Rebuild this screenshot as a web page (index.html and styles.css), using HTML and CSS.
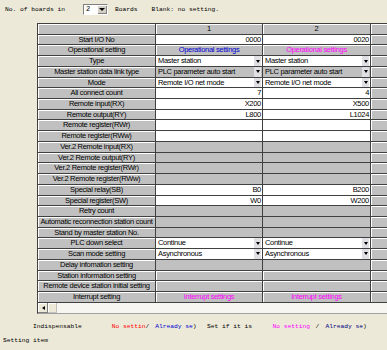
FILE: index.html
```html
<!DOCTYPE html>
<html lang="en">
<head>
    <meta charset="UTF-8">
    <meta name="viewport" content="width=device-width, initial-scale=1.0">
    <title>Network Parameter Setting</title>
    <link rel="stylesheet" href="styles.css">
</head>
<body>
    <div class="topbar">
        <span>No. of boards in</span>
        <div class="boards-select">
            <span class="boards-value">2</span>
            <span class="boards-arrow"></span>
        </div>
        <span class="boards-label">Boards</span>
        <span class="blank-note">Blank: no setting.</span>
    </div>

    <div class="table-wrap">
        <div class="grid">
            <div class="lbl"></div><div class="lbl">1</div><div class="lbl">2</div><div class="lbl"></div>

            <div class="lbl">Start I/O No</div>
            <div class="num">0000</div><div class="num">0020</div><div class="lbl"></div>

            <div class="lbl">Operational setting</div>
            <div class="btn blue">Operational settings</div><div class="btn pink">Operational settings</div><div class="lbl"></div>

            <div class="lbl">Type</div>
            <div class="sel"><span>Master station</span><span class="arrow"></span></div>
            <div class="sel"><span>Master station</span><span class="arrow"></span></div>
            <div class="lbl"></div>

            <div class="lbl">Master station data link type</div>
            <div class="sel off"><span>PLC parameter auto start</span><span class="arrow"></span></div>
            <div class="sel off"><span>PLC parameter auto start</span><span class="arrow"></span></div>
            <div class="lbl"></div>

            <div class="lbl">Mode</div>
            <div class="sel"><span>Remote I/O net mode</span><span class="arrow"></span></div>
            <div class="sel"><span>Remote I/O net mode</span><span class="arrow"></span></div>
            <div class="lbl"></div>

            <div class="lbl">All connect count</div>
            <div class="num">7</div><div class="num">4</div><div class="lbl"></div>

            <div class="lbl">Remote input(RX)</div>
            <div class="num">X200</div><div class="num">X500</div><div class="lbl"></div>

            <div class="lbl">Remote output(RY)</div>
            <div class="num">L800</div><div class="num">L1024</div><div class="lbl"></div>

            <div class="lbl">Remote register(RWr)</div>
            <div class="val"></div><div class="val"></div><div class="lbl"></div>

            <div class="lbl">Remote register(RWw)</div>
            <div class="val"></div><div class="val"></div><div class="lbl"></div>

            <div class="lbl">Ver.2 Remote input(RX)</div>
            <div class="off"></div><div class="off"></div><div class="lbl"></div>

            <div class="lbl">Ver.2 Remote output(RY)</div>
            <div class="off"></div><div class="off"></div><div class="lbl"></div>

            <div class="lbl">Ver.2 Remote register(RWr)</div>
            <div class="off"></div><div class="off"></div><div class="lbl"></div>

            <div class="lbl">Ver.2 Remote register(RWw)</div>
            <div class="off"></div><div class="off"></div><div class="lbl"></div>

            <div class="lbl">Special relay(SB)</div>
            <div class="num">B0</div><div class="num">B200</div><div class="lbl"></div>

            <div class="lbl">Special register(SW)</div>
            <div class="num">W0</div><div class="num">W200</div><div class="lbl"></div>

            <div class="lbl">Retry count</div>
            <div class="off"></div><div class="off"></div><div class="lbl"></div>

            <div class="lbl">Automatic reconnection station count</div>
            <div class="off"></div><div class="off"></div><div class="lbl"></div>

            <div class="lbl">Stand by master station No.</div>
            <div class="off"></div><div class="off"></div><div class="lbl"></div>

            <div class="lbl">PLC down select</div>
            <div class="sel"><span>Continue</span><span class="arrow"></span></div>
            <div class="sel"><span>Continue</span><span class="arrow"></span></div>
            <div class="lbl"></div>

            <div class="lbl">Scan mode setting</div>
            <div class="sel"><span>Asynchronous</span><span class="arrow"></span></div>
            <div class="sel"><span>Asynchronous</span><span class="arrow"></span></div>
            <div class="lbl"></div>

            <div class="lbl">Delay infomation setting</div>
            <div class="off"></div><div class="off"></div><div class="lbl"></div>

            <div class="lbl">Station information setting</div>
            <div class="btn"></div><div class="btn"></div><div class="lbl"></div>

            <div class="lbl">Remote device station initial setting</div>
            <div class="btn"></div><div class="btn"></div><div class="lbl"></div>

            <div class="lbl">Interrupt setting</div>
            <div class="btn pink">Interrupt settings</div><div class="btn pink">Interrupt settings</div><div class="lbl"></div>
        </div>
        <div class="scrollbar">
            <span class="scroll-btn"></span>
            <span class="scroll-thumb"></span>
        </div>
    </div>

    <div class="legend">
        <span>Indispensable</span>
        <span class="red gap-a">No settin</span><span>/</span>
        <span class="blue gap-b">Already se</span><span>)</span>
        <span class="gap-c">Set if it is</span>
        <span class="pink gap-d">No setting</span>
        <span class="gap-e">/</span>
        <span class="navy gap-f">Already se</span><span>)</span>
    </div>
    <div class="note">Setting item</div>
</body>
</html>
```

FILE: styles.css
```css
body {
    margin: 0;
    width: 387px;
    height: 350px;
    overflow: hidden;
    background-color: #ece9d8;
    color: #000;
    font-family: "Liberation Mono", monospace;
    font-size: 6.25px;
}
.topbar {
    display: flex;
    align-items: center;
    height: 15px;
    padding: 2px 0 0 5px;
    white-space: pre;
}
.boards-select {
    display: flex;
    box-sizing: border-box;
    width: 25px;
    height: 11px;
    margin-left: 18px;
    border: 1px solid;
    border-color: #808080 #fff #fff #808080;
    background: #fff;
}
.boards-value {
    flex: 1;
    padding-left: 2px;
    line-height: 9px;
    font-size: 7px;
}
.boards-arrow {
    display: flex;
    align-items: center;
    justify-content: center;
    width: 10px;
    background: #d4d0c8;
    box-shadow: inset 1px 1px #fff, inset -1px -1px #808080;
}
.boards-arrow::after {
    content: "";
    border-left: 3px solid transparent;
    border-right: 3px solid transparent;
    border-top: 3px solid #000;
}
.boards-label {
    margin-left: 7px;
}
.blank-note {
    margin-left: 14px;
}
.table-wrap {
    width: 350px;
    margin: 6px 0 0 37px;
    overflow: hidden;
}
.grid {
    display: grid;
    grid-template-columns: 117px 106px 107px 40px;
    grid-auto-rows: 9.73px;
    gap: 1px;
    padding: 1px 0 1px 1px;
    background: #404040;
    font-family: "Liberation Sans", Arial, sans-serif;
    font-size: 7.5px;
    letter-spacing: -0.3px;
    line-height: 9.73px;
}
.grid > div {
    overflow: hidden;
    white-space: nowrap;
}
.lbl, .btn {
    background: #c0c0c0;
    box-shadow: inset 1px 1px #fff;
    text-align: center;
}
.off {
    background: #c0c0c0;
}
.val {
    background: #fff;
}
.num {
    background: #fff;
    text-align: right;
    padding-right: 1px;
}
.sel {
    display: flex;
    background: #fff;
    padding-left: 2px;
}
.sel.off {
    background: #c0c0c0;
}
.sel span:first-child {
    flex: 1;
}
.arrow {
    display: flex;
    align-items: center;
    justify-content: center;
    width: 7px;
    margin-right: 1px;
    background: #e0dfe3;
}
.arrow::after {
    content: "";
    border-left: 2.5px solid transparent;
    border-right: 2.5px solid transparent;
    border-top: 3px solid #000;
}
.blue {
    color: #0000d0;
}
.pink {
    color: #ff00ff;
}
.red {
    color: #ff0000;
}
.navy {
    color: #000080;
}
.scrollbar {
    display: flex;
    height: 10px;
    background: #f7f6f1;
    border-left: 1px solid #404040;
    border-bottom: 1px solid #a0a0a0;
}
.scroll-btn {
    display: flex;
    align-items: center;
    justify-content: center;
    width: 10px;
    background: #ece9d8;
    box-shadow: inset -1px -1px #808080, inset 1px 1px #fff;
}
.scroll-btn::after {
    content: "";
    border-top: 2.5px solid transparent;
    border-bottom: 2.5px solid transparent;
    border-right: 3px solid #000;
}
.scroll-thumb {
    width: 9px;
    background: #ece9d8;
    box-shadow: inset -1px -1px #c0c0c0, inset 1px 1px #fff;
}
.legend {
    display: flex;
    height: 10px;
    margin-top: 8px;
    padding-left: 33px;
    line-height: 10px;
    white-space: pre;
}
.gap-a {
    margin-left: 30px;
}
.gap-b {
    margin-left: 6px;
}
.gap-c {
    margin-left: 10.5px;
}
.gap-d {
    margin-left: 20.3px;
}
.gap-e {
    margin-left: 5.5px;
}
.gap-f {
    margin-left: 6.25px;
}
.note {
    margin-top: 4px;
    padding-left: 3px;
    line-height: 10px;
}
```
